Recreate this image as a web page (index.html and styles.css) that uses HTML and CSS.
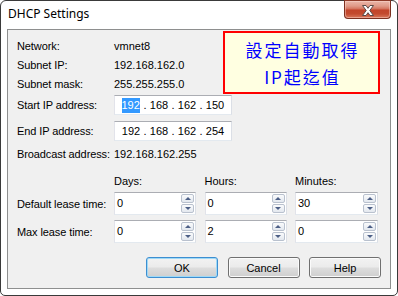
FILE: index.html
```html
<!DOCTYPE html>
<html lang="en">
<head>
<meta charset="utf-8">
<title>DHCP Settings</title>
<link rel="stylesheet" href="styles.css">
</head>
<body>
<div class="window">
  <div class="titlebar">
    <span class="title">DHCP Settings</span>
    <button class="close" aria-label="Close">
      <svg width="12" height="11" viewBox="0 0 12 11"><polygon points="0.5,0.5 4,0.5 6,3.3 8,0.5 11.5,0.5 7.8,5.5 11.5,10.5 8,10.5 6,7.7 4,10.5 0.5,10.5 4.2,5.5" fill="#ffffff" stroke="#5a4a48" stroke-width="1" stroke-linejoin="round"/></svg>
    </button>
  </div>
  <div class="client">
    <div class="info">
      <div class="row"><span class="lbl">Network:</span><span class="val">vmnet8</span></div>
      <div class="row"><span class="lbl">Subnet IP:</span><span class="val">192.168.162.0</span></div>
      <div class="row"><span class="lbl">Subnet mask:</span><span class="val">255.255.255.0</span></div>
      <div class="row iprow start"><span class="lbl">Start IP address:</span>
        <div class="ipbox"><span class="oct"><span class="sel">192</span></span><span class="dot">.</span><span class="oct">168</span><span class="dot">.</span><span class="oct">162</span><span class="dot">.</span><span class="oct">150</span></div>
      </div>
      <div class="row iprow end"><span class="lbl">End IP address:</span>
        <div class="ipbox"><span class="oct">192</span><span class="dot">.</span><span class="oct">168</span><span class="dot">.</span><span class="oct">162</span><span class="dot">.</span><span class="oct">254</span></div>
      </div>
      <div class="row bcast"><span class="lbl">Broadcast address:</span><span class="val">192.168.162.255</span></div>
    </div>

    <div class="lrow head"><span></span><span class="hdr">Days:</span><span class="hdr">Hours:</span><span class="hdr">Minutes:</span></div>
    <div class="lrow first">
      <span class="lbl">Default lease time:</span>
      <div class="spin"><span class="num">0</span><span class="btns"><span class="up"><i></i></span><span class="down"><i></i></span></span></div>
      <div class="spin"><span class="num">0</span><span class="btns"><span class="up"><i></i></span><span class="down"><i></i></span></span></div>
      <div class="spin"><span class="num">30</span><span class="btns"><span class="up"><i></i></span><span class="down"><i></i></span></span></div>
    </div>
    <div class="lrow second">
      <span class="lbl">Max lease time:</span>
      <div class="spin"><span class="num">0</span><span class="btns"><span class="up"><i></i></span><span class="down"><i></i></span></span></div>
      <div class="spin"><span class="num">2</span><span class="btns"><span class="up"><i></i></span><span class="down"><i></i></span></span></div>
      <div class="spin"><span class="num">0</span><span class="btns"><span class="up"><i></i></span><span class="down"><i></i></span></span></div>
    </div>

    <div class="buttons">
      <button class="btn default">OK</button>
      <button class="btn">Cancel</button>
      <button class="btn">Help</button>
    </div>

    <div class="note">設定自動取得<br>IP起迄值</div>
  </div>
</div>
</body>
</html>
```
FILE: styles.css
```css
* { box-sizing: border-box; }
html, body { margin: 0; padding: 0; background: #ffffff; }
body {
  width: 398px;
  height: 296px;
  overflow: hidden;
  font-family: "Liberation Sans", Arial, sans-serif;
  font-size: 11px;
  color: #000;
}
.window {
  width: 398px;
  height: 296px;
  border: 1px solid #3a3a3a;
  border-radius: 6px 6px 5px 5px;
  background: #ffffff;
  padding: 0 6px 6px 6px;
  display: flex;
  flex-direction: column;
}
.titlebar {
  height: 28px;
  flex: none;
  display: flex;
  justify-content: space-between;
  align-items: flex-start;
}
.title {
  font-family: "Noto Sans", sans-serif;
  font-size: 12px;
  line-height: 16px;
  margin: 5px 0 0 1px;
  color: #000;
}
.close {
  width: 47px;
  height: 19px;
  margin-top: -1px;
  padding: 0;
  border: 1px solid #7c3020;
  border-top-color: #8d3a28;
  border-radius: 0 0 4px 4px;
  background: linear-gradient(#ebb7aa 0%, #e09a88 30%, #d3705a 48%, #c2442a 52%, #c34a2e 75%, #d9785c 100%);
  box-shadow: inset 0 0 0 1px rgba(255, 220, 210, 0.45);
  display: flex;
  align-items: center;
  justify-content: center;
}
.close svg { display: block; margin-top: 1px; }

.client {
  position: relative;
  height: 260px;
  flex: none;
  border: 1px solid #8e8f8f;
  background: #f0f0f0;
  padding: 6px 9px 0 9px;
}
.row {
  display: flex;
  align-items: center;
  height: 19px;
}
.lbl {
  width: 97px;
  flex: none;
  letter-spacing: -0.1px;
  white-space: nowrap;
}
.val { white-space: nowrap; }
.iprow { height: 20px; }
.iprow.start { margin-top: 2px; }
.iprow.end { margin-top: 6px; }
.bcast { height: 18px; margin-top: 4px; }

.ipbox {
  width: 118px;
  height: 20px;
  background: #fff;
  border: 1px solid;
  border-color: #abadb3 #dbdfe6 #e3e9ef #e2e3ea;
  display: flex;
  align-items: center;
  padding-left: 7px;
}
.oct { width: 18px; text-align: center; display: flex; justify-content: center; }
.dot { width: 10px; text-align: center; }
.sel {
  display: block;
  width: 18px;
  margin-left: -1px;
  line-height: 15px;
  background: #3399ff;
  color: #fff;
  text-align: center;
}

.lrow {
  display: grid;
  grid-template-columns: 88.5px 82px 82px 83px;
  column-gap: 8.5px;
  align-items: center;
}
.lrow .lbl { width: auto; }
.lrow.head { height: 16px; margin-top: 10px; }
.lrow.head .hdr:first-of-type { padding-left: 1px; }
.lrow.first { margin-top: 3px; }
.lrow.second { margin-top: 5px; }
.hdr { white-space: nowrap; }

.spin {
  height: 23px;
  background: #fff;
  border: 1px solid;
  border-color: #abadb3 #dbdfe6 #e3e9ef #e2e3ea;
  display: flex;
}
.num {
  flex: 1;
  padding: 3px 0 0 2px;
  line-height: 14px;
}
.btns {
  width: 13px;
  flex: none;
  display: flex;
  flex-direction: column;
  gap: 1px;
  margin: 1px 1px 1px 0;
}
.btns > span {
  flex: 1;
  border: 1px solid #b9c1ce;
  border-radius: 2px;
  background: linear-gradient(#fafbfc, #e3e8ef);
  display: flex;
  align-items: center;
  justify-content: center;
}
.btns i {
  display: block;
  width: 0;
  height: 0;
  border-left: 3px solid transparent;
  border-right: 3px solid transparent;
}
.up i { border-bottom: 3px solid #4c5f86; }
.down i { border-top: 3px solid #4c5f86; }

.buttons {
  display: flex;
  justify-content: flex-end;
  gap: 9.5px;
  margin-top: 14px;
}
.btn {
  width: 72px;
  height: 21px;
  padding: 0;
  border: 1px solid #707070;
  border-radius: 3px;
  background: linear-gradient(#f2f2f2 0%, #ebebeb 48%, #dddddd 52%, #cfcfcf 100%);
  box-shadow: inset 0 0 0 1px #fbfbfb;
  font-family: "Liberation Sans", Arial, sans-serif;
  font-size: 11px;
  color: #000;
}
.btn.default {
  border-color: #3c8ed1;
  box-shadow: inset 0 0 0 1px #9fd9f6;
}

.note {
  position: absolute;
  left: 215px;
  top: 1px;
  width: 157px;
  height: 63px;
  border: 2px solid #ff0000;
  background: #ffffe1;
  color: #0000ff;
  font-family: "Noto Sans CJK TC", "Noto Sans CJK SC", sans-serif;
  font-size: 17px;
  line-height: 27px;
  letter-spacing: 2px;
  text-align: center;
  padding: 3px 0 0 2px;
}
```
